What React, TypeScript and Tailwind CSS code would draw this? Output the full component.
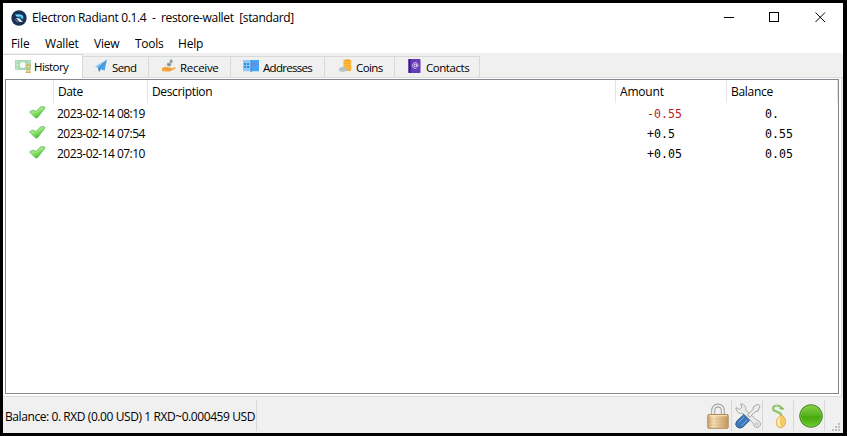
import React from "react";

const ui = "font-['Open_Sans','Noto_Sans',sans-serif]";

function AppLogo() {
  return (
    <svg width="16" height="16" viewBox="0 0 16 16">
      <circle cx="8" cy="8" r="7.7" fill="#1b2f52" />
      <path d="M3.7 4.3h5.2c3.2 0 4.6 3 2.7 5.2L9.4 7.2H6.1z" fill="#35aee6" />
      <path d="M5 5.4h4.2c1.8 0 2.4 1.5 1.6 2.8" fill="none" stroke="#8edbf5" strokeWidth=".9" />
      <path d="M5 8.3h3.4l3.4 3.8H8.6z" fill="#dcebf3" />
      <path d="M4.2 8.7l3.6 3.8H6.2L4 10.3z" fill="#4b7a9e" />
    </svg>
  );
}

function HistoryIcon() {
  return (
    <svg width="17" height="14" viewBox="0 0 17 14">
      <rect x="0" y="1" width="16" height="10" rx=".7" fill="#a9d8b4" />
      <path d="M1.2 2.2h2l-2 2zM14.8 2.2h-2l2 2zM1.2 9.8h2l-2-2z" fill="#d5eedb" />
      <circle cx="7.8" cy="6" r="3" fill="#f7fcf8" />
      <circle cx="2.5" cy="6" r="1" fill="#d9efdf" />
      <path d="M10.5 5.500h5.500v1.300h-.7c0 1.800-1 2.200-1 2.900s1 1.100 1 3h.7V14h-5.500v-1.300h.7c0-1.900 1-2.300 1-3s-1-1.100-1-2.900h-.7z" fill="#d3b566" />
      <path d="M12 7h2.500l-1.200 1.800zM12 12.500h2.500l-1.200-2z" fill="#fbf0c0" />
    </svg>
  );
}

function SendIcon() {
  return (
    <svg width="12" height="14" viewBox="0 0 12 14">
      <path d="M12 .6L0 7.600l3.200 1.400z" fill="#83c5f8" />
      <path d="M12 .6L3.200 9l.900 4 1.900-2.800 3.600 1.600z" fill="#4ea3e8" />
      <path d="M12 .6L3.200 9l.900 4 .700-4z" fill="#2c7cc4" />
    </svg>
  );
}

function ReceiveIcon() {
  return (
    <svg width="14" height="14" viewBox="0 0 14 14">
      <path d="M0 9l3-1.200c2-.3 3 .9 5 .8 1.500-.1 1.300 1 .3 1.200l4.200-1.500c1.400-.3 1.600.7.500 1.400l-4.600 2.600c-2.200.8-4.500-.4-8.400.1z" fill="#f5a33c" />
      <path d="M4.600 9.900h4" stroke="#e58f2c" strokeWidth=".7" />
      <ellipse cx="7" cy="5.500" rx="2.300" ry="2" fill="#9aa6ad" />
      <ellipse cx="9.200" cy="2.300" rx="1.600" ry="2.100" fill="#a4b0b7" />
      <path d="M6 5.500h2M9 1.300v2" stroke="#6c7c86" strokeWidth=".8" />
    </svg>
  );
}

function AddressesIcon() {
  return (
    <svg width="16" height="12" viewBox="0 0 16 12">
      <path d="M0 0h8v12l-1-.7H0z" fill="#90caf9" />
      <path d="M8 0h8v11.300H9L8 12z" fill="#42a5f5" />
      <path d="M1 3h2v2H1zm3 0h2v2H4zM1 6h2v2H1zm3 0h2v2H4z" fill="#2f8ddd" />
      <path d="M9.500 3h2v1.500h-2zm3 0h2v1.500h-2zm-1.500 2h1.500v1.500H11z" fill="#a070b8" />
      <path d="M7.600 0h.8v12h-.8z" fill="#2b83dc" />
    </svg>
  );
}

function CoinsIcon() {
  return (
    <svg width="13" height="13" viewBox="0 0 13 13">
      <path d="M4.500 1.200Q8.500-.7 12.200 1.200v10.200q-3.500 1.400-7.700 0z" fill="#f9a825" />
      <path d="M4.500 2.800q4 1.400 7.700 0M4.500 5.100q4 1.400 7.700 0M4.500 7.400q4 1.400 7.700 0M4.500 9.700q4 1.400 7.700 0" fill="none" stroke="#ffd070" strokeWidth=".7" />
      <path d="M0 9q3.500-1.700 7.500 0v3.100q-3.700 1.400-7.500 0z" fill="#9caeb7" />
      <path d="M0 9.300q3.500 1.400 7.500 0M0 11.100q3.500 1.400 7.500 0" fill="none" stroke="#dce5e9" strokeWidth=".7" />
    </svg>
  );
}

function ContactsIcon() {
  return (
    <svg width="13" height="14" viewBox="0 0 13 14">
      <rect x=".5" y="0" width="12" height="14" rx=".8" fill="#673ab7" />
      <path d="M.5 0h2v14h-2z" fill="#321a91" />
      <circle cx="7.300" cy="6.500" r="1.300" fill="none" stroke="#fff" strokeWidth=".8" />
      <path d="M8.700 5.200v2.100q1.500 1.200 1.500-.8a2.900 2.900 0 1 0-1.500 2.600" fill="none" stroke="#e9dff8" strokeWidth=".8" />
    </svg>
  );
}

function CheckIcon() {
  return (
    <svg width="17" height="13" viewBox="0 0 17 13">
      <defs>
        <linearGradient id="check" x1="0" y1="0" x2=".6" y2="1">
          <stop offset="0" stopColor="#d5f7c0" />
          <stop offset=".5" stopColor="#9be878" />
          <stop offset="1" stopColor="#3fbc20" />
        </linearGradient>
      </defs>
      <path d="M.5 5.800Q2.800 4 4.600 4.300L6.900 5.700 11.200 1.200Q13.500-.2 15.600 1.100q.5.700-.2 1.600L8.700 11.400q-1.300 1.200-2.600.2z" fill="url(#check)" stroke="#55b45a" strokeWidth=".8" strokeLinejoin="round" />
    </svg>
  );
}

function LockIcon() {
  return (
    <svg width="22" height="26" viewBox="0 0 22 26">
      <defs>
        <linearGradient id="brass" x1="0" x2="1">
          <stop offset="0" stopColor="#cfa56a" />
          <stop offset=".28" stopColor="#f5e0ba" />
          <stop offset=".55" stopColor="#e2c28e" />
          <stop offset="1" stopColor="#c49b62" />
        </linearGradient>
      </defs>
      <path d="M6.200 13V7.500C6.200.8 15.800.8 15.800 7.500V13" fill="none" stroke="#9a9c98" strokeWidth="4" />
      <path d="M6.200 13V7.500C6.200.8 15.800.8 15.800 7.500V13" fill="none" stroke="#ecedea" strokeWidth="2.200" />
      <rect x=".8" y="11.500" width="20.400" height="13.800" rx="1" fill="url(#brass)" stroke="#b08c58" />
      <path d="M2 12.700h18" stroke="#fae7c1" />
      <path d="M2 16h18M2 19h18M2 22h18" stroke="#af814033" />
    </svg>
  );
}

function ToolsIcon() {
  return (
    <svg width="26" height="26" viewBox="0 0 26 26">
      <path d="M1 4.500L4.500 6.500 7 4 5.500 1c3-.5 6 2.200 5 5.700l11 10.300c5 .6 5.300 7 .7 7.500-2.500 0-3.800-1.900-3.500-3.700L8 10.500C4 11.200.6 8.300 1 4.500z" fill="#eaebe8" stroke="#a0a29d" strokeWidth=".9" />
      <circle cx="21.700" cy="21" r="1.300" fill="#f8f8f8" stroke="#aaa" strokeWidth=".8" />
      <path d="M12.500 12l5.500-5.700.3-2.500 4.700-2.600 2 2-2.200 5-2.500.3-5.600 5.700z" fill="#eeeeec" stroke="#999b96" strokeWidth=".9" />
      <path d="M8.800 11.500L14.700 17.400 8 24q-3.200 2.300-5.900 0t-.4-5.900z" fill="#4079b9" stroke="#2a5790" strokeWidth=".9" />
      <path d="M9 14L3.500 19.600M12.300 17L6.500 22.800" stroke="#7fa9d8" />
    </svg>
  );
}

function SeedIcon() {
  return (
    <svg width="16" height="26" viewBox="0 0 16 26">
      <path d="M10.500 5C8 .8 1.500 2.500 2 6c.5 3.500 9 2 8.500 7" fill="none" stroke="#6fb04c" strokeWidth="2" />
      <path d="M10.500 5C8 .8 1.500 2.500 2 6c.5 3.500 9 2 8.500 7" fill="none" stroke="#b9e68e" strokeWidth=".8" />
      <path d="M8 5.500c2-1.700 4-1.500 5.500.7-2 .8-4 .5-5.500-.7z" fill="#82be58" />
      <path d="M10 11.900c5.200 1.800 6 8.600 2.300 12-3.200 2-7.100-.2-7-4 .1-3.900 2.400-6.400 4.700-8z" fill="#f3c963" stroke="#dca94f" strokeWidth=".8" />
      <path d="M9.500 13c-1.500 4-1 7.400.6 10.500-3 .2-4.400-2.200-3.800-5.600.5-2.300 1.800-3.700 3.200-4.900z" fill="#fdedb8" />
    </svg>
  );
}

function StatusIcon() {
  return (
    <svg width="24" height="24" viewBox="0 0 24 24">
      <defs>
        <linearGradient id="led" x1="0" y1="0" x2="0" y2="1">
          <stop offset="0" stopColor="#8bd047" />
          <stop offset=".45" stopColor="#58b41e" />
          <stop offset=".55" stopColor="#45a80d" />
          <stop offset="1" stopColor="#6ccc2c" />
        </linearGradient>
      </defs>
      <circle cx="12" cy="12" r="11.300" fill="url(#led)" stroke="#3c7d22" strokeWidth="1" />
      <circle cx="12" cy="12" r="10.300" fill="none" stroke="#8bcb55" strokeWidth=".6" />
    </svg>
  );
}

const menus = [
  { label: "File", cls: "w-[34px] tracking-[-0.1px]" },
  { label: "Wallet", cls: "w-[49px] tracking-[-0.2px]" },
  { label: "View", cls: "w-[41px] tracking-[-0.2px]" },
  { label: "Tools", cls: "w-[43px] tracking-[-0.3px]" },
  { label: "Help", cls: "tracking-[-0.2px]" },
];

const tabs = [
  { label: "Send", icon: <SendIcon />, cls: "w-[66px] pl-[12px]", text: "ml-[5px] tracking-[-0.6px]" },
  { label: "Receive", icon: <ReceiveIcon />, cls: "w-[82px] pl-[13px]", text: "ml-[4px] tracking-[-0.3px]" },
  { label: "Addresses", icon: <AddressesIcon />, cls: "w-[94px] pl-[12px]", text: "ml-[4px] tracking-[-0.7px]" },
  { label: "Coins", icon: <CoinsIcon />, cls: "w-[70px] pl-[14px]", text: "ml-[4px] tracking-[-0.6px]" },
  { label: "Contacts", icon: <ContactsIcon />, cls: "w-[85px] pl-[13px]", text: "ml-[5px] tracking-[-0.45px]" },
];

const rows = [
  { date: "2023-02-14 08:19", amount: "-0.55", balance: "0.", color: "text-[#bc1e1e]" },
  { date: "2023-02-14 07:54", amount: "+0.5", balance: "0.55", color: "text-black" },
  { date: "2023-02-14 07:10", amount: "+0.05", balance: "0.05", color: "text-black" },
];

export default function App() {
  return (
    <div className={`h-[436px] w-[847px] overflow-hidden bg-black pt-[3px] pl-[3px] text-[12px] text-black ${ui}`}>
      <div className="flex h-[430px] w-[840px] flex-col bg-[#f0f0f0] whitespace-pre">
        <header className="flex h-[29px] shrink-0 items-center bg-white pl-[8px]">
          <AppLogo />
          <span className="ml-[5px] pt-px tracking-[-0.34px]">{"Electron Radiant 0.1.4  -  restore-wallet  [standard]"}</span>
          <div className="mr-[17px] ml-auto flex items-center">
            <svg className="mr-[34px]" width="11" height="11" viewBox="0 0 11 11" shapeRendering="crispEdges"><path d="M0 5.500h10" stroke="#000" /></svg>
            <svg className="mr-[35px]" width="11" height="11" viewBox="0 0 11 11" shapeRendering="crispEdges"><path d="M.5 .5h9v9h-9z" fill="none" stroke="#000" /></svg>
            <svg width="11" height="11" viewBox="0 0 11 11"><path d="M.5 .5l9.500 9.500M10 .5l-9.500 9.500" stroke="#000" /></svg>
          </div>
        </header>
        <nav className="flex h-[21px] shrink-0 items-center bg-white pt-[3px] pl-[8px]">
          {menus.map((m) => <span key={m.label} className={m.cls}>{m.label}</span>)}
        </nav>
        <div className="flex h-[25px] shrink-0 items-end text-[11.5px]">
          <div className="flex h-[24px] w-[80px] items-center border-t border-r border-[#d9d9d9] bg-white pl-[12px]">
            <span className="-mt-[2px]"><HistoryIcon /></span>
            <span className="ml-[2px] tracking-[-0.6px]">History</span>
          </div>
          {tabs.map((t) => (
            <div key={t.label} className={`flex h-[22px] items-center border-t border-r border-b border-[#d9d9d9] ${t.cls}`}>
              <span className="-mt-[3px]">{t.icon}</span>
              <span className={`pt-px ${t.text}`}>{t.label}</span>
            </div>
          ))}
          <div className="h-px grow bg-[#d9d9d9]" />
        </div>
        <main className="flex h-[319px] w-[839px] shrink-0 border-r border-b border-[#d9d9d9] bg-white">
          <div className="mt-[1px] ml-[2px] h-[315px] w-[834px] border border-[#828790]">
            <div className="flex h-[23px] items-center">
              <span className="h-full w-[48px] border-r border-[#e5e5e5]" />
              <span className="flex h-full w-[94px] items-center border-r border-[#e5e5e5] pt-px pl-[4px] tracking-[-0.4px]">Date</span>
              <span className="flex h-full w-[468px] items-center border-r border-[#e5e5e5] pt-px pl-[4px] tracking-[-0.35px]">Description</span>
              <span className="flex h-full w-[111px] items-center border-r border-[#e5e5e5] pt-px pl-[4px] tracking-[-0.2px]">Amount</span>
              <span className="flex h-full w-[111px] items-center border-r border-[#e5e5e5] pt-px pl-[4px] tracking-[-0.3px]">Balance</span>
            </div>
            {rows.map((r) => (
              <div key={r.date} className="flex h-[20px] items-center">
                <span className="-mt-[2px] w-[51px] pl-[23px]"><CheckIcon /></span>
                <span className="w-[590px] pt-[2px] tracking-[-0.53px]">{r.date}</span>
                <span className={`w-[118px] pt-[3px] font-['DejaVu_Sans_Mono',monospace] text-[11.6px] ${r.color}`}>{r.amount}</span>
                <span className="pt-[3px] font-['DejaVu_Sans_Mono',monospace] text-[11.6px]">{r.balance}</span>
              </div>
            ))}
          </div>
        </main>
        <footer className="flex h-[36px] items-center">
          <span className="flex h-[31px] w-[254px] items-center border-r border-[#d7d7d7] pt-[3px] pl-[2px] tracking-[-0.42px]">Balance: 0. RXD (0.00 USD) 1 RXD~0.000459 USD</span>
          <div className="ml-auto flex h-[31px] items-center">
            <span className="flex h-full w-[29px] items-center border-r border-[#d7d7d7] pt-[2px] pl-[4px]"><LockIcon /></span>
            <span className="flex h-full w-[31px] items-center border-r border-[#d7d7d7] pt-px pl-[3px]"><ToolsIcon /></span>
            <span className="flex h-full w-[31px] items-center border-r border-[#d7d7d7] pt-[2px] pl-[8px]"><SeedIcon /></span>
            <span className="flex h-full w-[31px] items-center border-r border-[#d7d7d7] pt-[2px] pl-[5px]"><StatusIcon /></span>
          </div>
          <svg className="mt-[24px] mr-[2px] ml-[7px]" width="9" height="9" viewBox="0 0 9 9" fill="#bdbdbd" shapeRendering="crispEdges">
            <path d="M6 0h2v2H6zM3 3h2v2H3zm3 0h2v2H6zM0 6h2v2H0zm3 0h2v2H3zm3 0h2v2H6z" />
          </svg>
        </footer>
      </div>
    </div>
  );
}
